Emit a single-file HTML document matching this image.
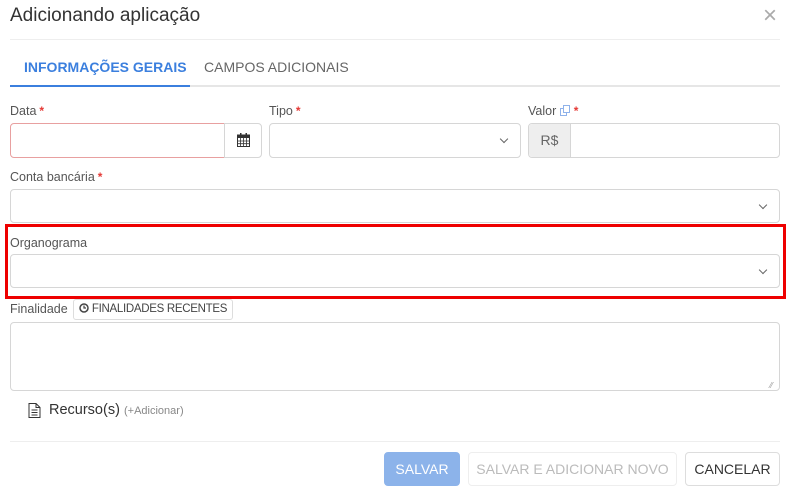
<!DOCTYPE html><html><head><meta charset="utf-8"><style>
*{box-sizing:border-box;margin:0;padding:0}
body{width:790px;height:491px;background:#fff;font-family:"Liberation Sans",sans-serif;position:relative;overflow:hidden;color:#555}
.a{position:absolute;white-space:nowrap}
.lbl{font-size:12.5px;color:#555}
.lbl b{color:#e53935;font-size:12px;margin-left:3px}
.inp{border:1px solid #d6d6d6;border-radius:4px;background:#fff}
.chev{position:absolute;right:13px;top:12px;width:6px;height:6px;border-right:1px solid #666;border-bottom:1px solid #666;transform:rotate(45deg)}
.btn{border:1px solid #ddd;border-radius:4px;font-size:14px;text-align:center;line-height:32px}
</style></head><body>
<div class="a" style="left:10px;top:5px;font-size:19px;color:#333">Adicionando aplicação</div>
<div class="a" style="left:763px;top:2px;font-size:24px;color:#aaa">×</div>
<div class="a" style="left:10px;top:39px;width:770px;height:1px;background:#eee"></div>
<div class="a" style="left:24px;top:59px;font-size:14px;color:#3b7fde;font-weight:bold">INFORMAÇÕES GERAIS</div>
<div class="a" style="left:204px;top:59px;font-size:14px;color:#666">CAMPOS ADICIONAIS</div>
<div class="a" style="left:10px;top:85px;width:770px;height:2px;background:#e6e6e6"></div>
<div class="a" style="left:10px;top:85px;width:180px;height:2px;background:#3b7fde"></div>

<div class="a lbl" style="left:10px;top:104px">Data<b>*</b></div>
<div class="a inp" style="left:10px;top:123px;width:215px;height:35px;border-color:#e8a0a0;border-radius:4px 0 0 4px"></div>
<div class="a inp" style="left:224px;top:123px;width:38px;height:35px;border-radius:0 4px 4px 0;text-align:center;padding-top:9px">
<svg width="13" height="14" viewBox="0 0 13 14"><rect x="0.5" y="2" width="12" height="11.5" fill="none" stroke="#333"/><rect x="0.5" y="2" width="12" height="3" fill="#333"/><rect x="3" y="0" width="1.5" height="3" fill="#333"/><rect x="8.5" y="0" width="1.5" height="3" fill="#333"/><path d="M0.5 8h12M0.5 10.7h12M3.5 5v8.5M6.5 5v8.5M9.5 5v8.5" stroke="#333" stroke-width="0.8"/></svg></div>
<div class="a lbl" style="left:269px;top:104px">Tipo<b>*</b></div>
<div class="a inp" style="left:269px;top:123px;width:252px;height:35px"><div class="chev"></div></div>
<div class="a lbl" style="left:528px;top:104px">Valor <svg width="11" height="11" viewBox="0 0 11 11" style="vertical-align:-1px"><rect x="0.5" y="3.5" width="6" height="7" fill="none" stroke="#8fb2ea"/><rect x="3.5" y="0.5" width="6" height="7" fill="#fff" stroke="#8fb2ea"/></svg><b>*</b></div>
<div class="a inp" style="left:528px;top:123px;width:252px;height:35px"></div>
<div class="a" style="left:529px;top:124px;width:42px;height:33px;background:#eee;border-right:1px solid #d6d6d6;border-radius:4px 0 0 4px;font-size:14px;color:#666;text-align:center;line-height:33px">R$</div>

<div class="a lbl" style="left:10px;top:170px">Conta bancária<b>*</b></div>
<div class="a inp" style="left:10px;top:189px;width:770px;height:34px"><div class="chev"></div></div>

<div class="a" style="left:5px;top:224px;width:781px;height:75px;border:3px solid #e00"></div>
<div class="a lbl" style="left:10px;top:236px">Organograma</div>
<div class="a inp" style="left:10px;top:254px;width:770px;height:34px"><div class="chev"></div></div>

<div class="a lbl" style="left:10px;top:302px">Finalidade</div>
<div class="a" style="left:73px;top:299px;width:160px;height:21px;border:1px solid #ddd;border-radius:3px;font-size:11.5px;letter-spacing:-0.3px;color:#444;line-height:19px;padding-left:5px"><svg width="10" height="10" viewBox="0 0 10 10" style="vertical-align:-1px"><circle cx="5" cy="5" r="4" fill="none" stroke="#444" stroke-width="1.5"/><path d="M5 2.5V5H7" fill="none" stroke="#444" stroke-width="1.2"/></svg> FINALIDADES RECENTES</div>
<div class="a inp" style="left:10px;top:322px;width:770px;height:69px"></div>
<div class="a" style="left:770px;top:381px;font-size:8px;color:#999">⁄⁄</div>

<div class="a" style="left:28px;top:403px"><svg width="13" height="15" viewBox="0 0 13 15"><path d="M1 .5h7l4 4v10H1z M8 .5v4h4 M3.5 7h6M3.5 9.5h6M3.5 12h6" fill="none" stroke="#333"/></svg></div>
<div class="a" style="left:49px;top:402px;font-size:14.5px;color:#333">Recurso(s)</div>
<div class="a" style="left:124px;top:405px;font-size:11px;color:#888">(+Adicionar)</div>

<div class="a" style="left:10px;top:441px;width:770px;height:1px;background:#eee"></div>
<div class="a btn" style="left:384px;top:452px;width:76px;height:34px;background:#8cb3ea;border-color:#8cb3ea;color:#fff">SALVAR</div>
<div class="a btn" style="left:468px;top:452px;width:209px;height:34px;color:#bbb;border-color:#eee">SALVAR E ADICIONAR NOVO</div>
<div class="a btn" style="left:685px;top:452px;width:95px;height:34px;color:#333">CANCELAR</div>
</body></html>
